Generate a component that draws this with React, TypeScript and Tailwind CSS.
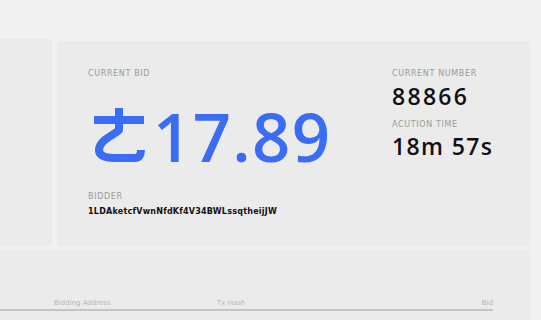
import React from 'react';

const font = { fontFamily: '"DejaVu Sans", "Noto Sans", sans-serif' };
const numFont = { fontFamily: '"Open Sans", "Noto Sans", sans-serif' };

const CoinGlyph = () => (
  <svg width="52" height="54" viewBox="0 0 52 54" className="shrink-0">
    <g fill="none" stroke="#3a6cf4" strokeWidth="8" strokeLinecap="butt" strokeLinejoin="round">
      <path d="M1 12 H51" />
      <path d="M26 0 V22 C20 28 6 32 6 42 C6 48 12 50 22 50 H42 C46 50 48 47 48 42" />
    </g>
  </svg>
);

const Label = ({ children }: { children: React.ReactNode }) => (
  <div className="text-[8px] leading-[10px] tracking-[0.08em] text-[#9a9a9a] uppercase">{children}</div>
);

export default function App() {
  return (
    <div className="w-[541px] h-[320px] bg-[#f1f1f1] overflow-hidden" style={font}>
      <div className="h-[39px]" />
      <div className="flex gap-[5px]">
        <div className="w-[52px] h-[207px] bg-[#ebebeb]" />
        <div className="mt-[2px] w-[473px] h-[205px] bg-[#ebebeb] flex pl-[31px] pt-[28px]">
          <div className="w-[304px] flex flex-col">
            <Label>Current Bid</Label>
            <div className="mt-[29px] flex items-end gap-[8px] h-[56px]">
              <div className="ml-[5px] mb-[2px]">
                <CoinGlyph />
              </div>
              <div
                className="text-[67px] leading-[56px] font-semibold text-[#3a6cf4] tracking-[0.02em]"
                style={numFont}
              >
                17.89
              </div>
            </div>
            <div className="mt-[28px]">
              <Label>Bidder</Label>
            </div>
            <div className="mt-[5px] text-[8px] leading-[10px] font-bold tracking-[0.03em] text-[#111]">
              1LDAketcfVwnNfdKf4V34BWLssqtheijJW
            </div>
          </div>
          <div className="flex flex-col">
            <Label>Current Number</Label>
            <div
              className="mt-[5px] text-[23px] leading-[24px] font-semibold tracking-[0.1em] text-[#111]"
              style={numFont}
            >
              88866
            </div>
            <div className="mt-[12px]">
              <Label>Acution Time</Label>
            </div>
            <div
              className="mt-[4px] text-[23px] leading-[24px] font-semibold tracking-[0.06em] text-[#111]"
              style={numFont}
            >
              18m 57s
            </div>
          </div>
        </div>
      </div>
      <div className="mt-[4px] w-[530px] h-[70px] bg-[#ebebeb] pt-[49px]">
        <div className="w-[493px] border-b-[2px] border-[#c4c4c4] flex text-[7px] leading-[9px] text-[#b5b5b5] pb-[1px]">
          <div className="ml-[54px] w-[163px]">Bidding Address</div>
          <div className="flex-1">Tx Hash</div>
          <div>Bid</div>
        </div>
      </div>
    </div>
  );
}
